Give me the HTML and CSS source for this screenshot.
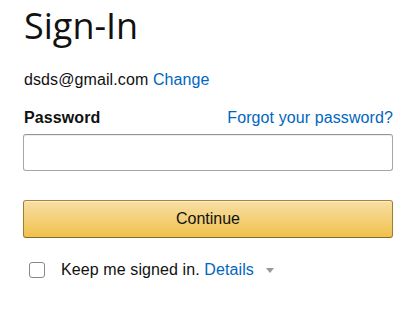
FILE: index.html
```html
<!DOCTYPE html>
<html>
<head>
<meta charset="utf-8">
<link rel="stylesheet" href="styles.css">
</head>
<body>
<div class="signin">
  <h1 class="title">Sign-In</h1>
  <div class="email">dsds@gmail.com <a class="link" href="#">Change</a></div>
  <div class="label-row">
    <label class="label">Password</label>
    <a class="link" href="#">Forgot your password?</a>
  </div>
  <input class="input" type="password">
  <button class="button">Continue</button>
  <div class="remember">
    <span class="checkbox"></span>
    <span class="remember-text">Keep me signed in. <a class="link" href="#">Details</a></span>
    <span class="caret"></span>
  </div>
</div>
</body>
</html>
```

FILE: styles.css
```css
html, body {
  margin: 0;
  padding: 0;
  background: #fff;
}
body {
  font-family: "Liberation Sans", Arial, sans-serif;
  font-size: 16px;
  color: #111;
}
.signin {
  width: 370px;
  padding: 6px 0 0 23px;
  display: flex;
  flex-direction: column;
}
.title {
  margin: 0 0 0 1px;
  font-family: "Open Sans", "Noto Sans", sans-serif;
  font-weight: 400;
  font-size: 36px;
  line-height: 40px;
  color: #111;
}
.email {
  margin: 24px 0 0 1px;
  line-height: 20px;
  letter-spacing: 0.1px;
}
.link {
  color: #0066c0;
  text-decoration: none;
}
.label-row {
  margin: 18px 0 0 1px;
  display: flex;
  justify-content: space-between;
  line-height: 20px;
  letter-spacing: 0.1px;
}
.label {
  font-weight: 700;
}
.input {
  margin: 6px 0 0 0;
  box-sizing: border-box;
  width: 370px;
  height: 37px;
  border: 1px solid #a6a6a6;
  border-top-color: #949494;
  border-radius: 3px;
  box-shadow: 0 1px 0 rgba(255,255,255,.5), 0 1px 0 rgba(0,0,0,.07) inset;
  padding: 3px 7px;
  font-size: 16px;
  outline: none;
}
.button {
  margin: 29px 0 0 0;
  box-sizing: border-box;
  width: 370px;
  height: 38px;
  border: 1px solid;
  border-color: #a88734 #9c7e31 #846a29;
  border-radius: 3px;
  background: linear-gradient(to bottom, #f7dfa5, #f0c14b);
  box-shadow: 0 1px 0 rgba(255,255,255,.4) inset;
  font-family: "Liberation Sans", Arial, sans-serif;
  font-size: 16px;
  color: #111;
  padding: 0;
}
.remember {
  margin: 22px 0 0 6px;
  display: flex;
  align-items: center;
  line-height: 20px;
  letter-spacing: 0.1px;
}
.checkbox {
  box-sizing: border-box;
  width: 16px;
  height: 16px;
  border: 1px solid #888;
  border-radius: 3px;
  background: #fff;
  margin-right: 16px;
  flex: none;
}
.caret {
  margin-left: 12px;
  width: 0;
  height: 0;
  border-left: 4px solid transparent;
  border-right: 4px solid transparent;
  border-top: 5px solid #999;
}
```
